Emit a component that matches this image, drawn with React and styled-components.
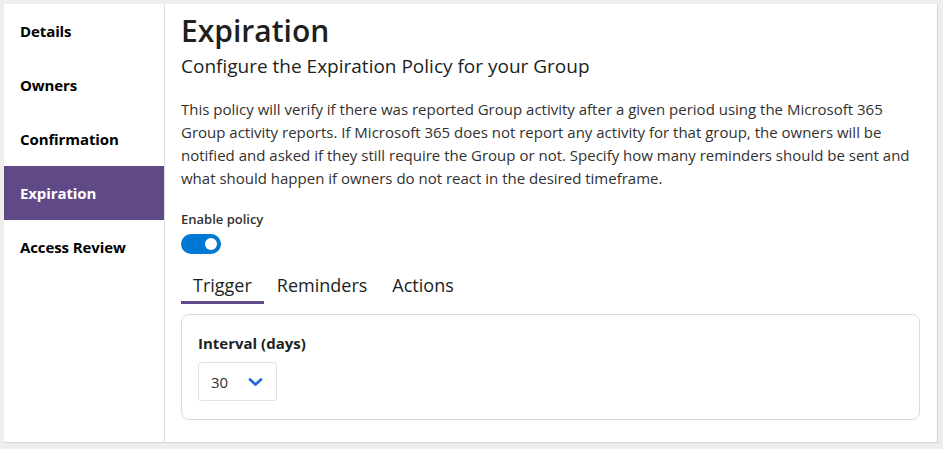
import React, { useState } from 'react'
import styled, { createGlobalStyle } from 'styled-components'

const GlobalStyle = createGlobalStyle`
  body {
    margin: 0;
    background: #efeeed;
    font-family: "Segoe UI", "Open Sans", sans-serif;
    color: #323130;
  }
`

const Shell = styled.div`
  display: flex;
  margin: 4px;
  width: 934px;
  height: 439px;
  box-sizing: border-box;
  border-right: 1px solid #d4d4d4;
  border-bottom: 1px solid #d4d4d4;
  background: #fff;
`

const Nav = styled.nav`
  display: flex;
  flex-direction: column;
  width: 160px;
  flex-shrink: 0;
  border-right: 1px solid #dcdcdc;
`

const NavItem = styled.div`
  display: flex;
  align-items: center;
  height: 54px;
  padding-left: 16px;
  font-size: 15px;
  font-weight: 700;
  letter-spacing: -0.1px;
  color: ${(props) => (props.active ? '#ffffff' : '#000000')};
  background: ${(props) => (props.active ? '#5f4986' : 'transparent')};
  cursor: pointer;
`

const Main = styled.main`
  flex: 1;
  padding: 9px 17px 0 16px;
  min-width: 0;
`

const Title = styled.h1`
  margin: 0;
  font-size: 30px;
  line-height: 36px;
  font-weight: 600;
  color: #201f1e;
`

const Subtitle = styled.h2`
  margin: 5px 0 0;
  font-size: 19px;
  line-height: 24px;
  font-weight: 400;
  color: #201f1e;
`

const Description = styled.p`
  margin: 20px 0 0;
  font-size: 15px;
  line-height: 23px;
`

const Label = styled.div`
  margin-top: 21px;
  font-size: 13px;
  line-height: 16px;
  font-weight: 600;
`

const Toggle = styled.button`
  display: flex;
  align-items: center;
  justify-content: ${(props) => (props.on ? 'flex-end' : 'flex-start')};
  margin-top: 7px;
  width: 40px;
  height: 20px;
  padding: 0 4px;
  border: none;
  border-radius: 10px;
  background: ${(props) => (props.on ? '#0078d4' : '#c8c6c4')};
  cursor: pointer;
`

const Knob = styled.span`
  width: 12px;
  height: 12px;
  border-radius: 50%;
  background: #fff;
`

const Tabs = styled.div`
  display: flex;
  margin-top: 14px;
`

const Tab = styled.div`
  height: 36px;
  box-sizing: border-box;
  padding: 0 12px;
  display: flex;
  align-items: center;
  font-size: 18px;
  color: #201f1e;
  border-bottom: 3px solid ${(props) => (props.active ? '#5f4986' : 'transparent')};
  cursor: pointer;

  & + & {
    padding-left: 13px;
  }
`

const Card = styled.section`
  margin-top: 10px;
  padding: 18px 16px 18px;
  border: 1px solid #dadada;
  border-radius: 8px;
`

const FieldLabel = styled.div`
  font-size: 15px;
  line-height: 21px;
  font-weight: 700;
  color: #201f1e;
`

const Select = styled.div`
  display: flex;
  align-items: center;
  justify-content: space-between;
  margin-top: 8px;
  width: 79px;
  height: 39px;
  box-sizing: border-box;
  padding: 0 13px 0 12px;
  border: 1px solid #e1e1e1;
  border-radius: 3px;
  font-size: 15px;
  color: #323130;
`

const Chevron = () => (
  <svg width="15" height="10" viewBox="0 0 15 10">
    <polyline points="2,2.5 7.5,7.5 13,2.5" fill="none" stroke="#2a6ad8" strokeWidth="2.8" strokeLinecap="round" strokeLinejoin="round" />
  </svg>
)

const navItems = ['Details', 'Owners', 'Confirmation', 'Expiration', 'Access Review']
const tabs = ['Trigger', 'Reminders', 'Actions']

export default function App() {
  const [active, setActive] = useState('Expiration')
  const [tab, setTab] = useState('Trigger')
  const [enabled, setEnabled] = useState(true)

  return (
    <>
      <GlobalStyle />
      <Shell>
        <Nav>
          {navItems.map((item) => (
            <NavItem key={item} active={item === active} onClick={() => setActive(item)}>
              {item}
            </NavItem>
          ))}
        </Nav>
        <Main>
          <Title>Expiration</Title>
          <Subtitle>Configure the Expiration Policy for your Group</Subtitle>
          <Description>
            This policy will verify if there was reported Group activity after a given period using the Microsoft 365
            Group activity reports. If Microsoft 365 does not report any activity for that group, the owners will be
            notified and asked if they still require the Group or not. Specify how many reminders should be sent and
            what should happen if owners do not react in the desired timeframe.
          </Description>
          <Label>Enable policy</Label>
          <Toggle on={enabled} onClick={() => setEnabled(!enabled)}>
            <Knob />
          </Toggle>
          <Tabs>
            {tabs.map((t) => (
              <Tab key={t} active={t === tab} onClick={() => setTab(t)}>
                {t}
              </Tab>
            ))}
          </Tabs>
          <Card>
            <FieldLabel>Interval (days)</FieldLabel>
            <Select>
              <span>30</span>
              <Chevron />
            </Select>
          </Card>
        </Main>
      </Shell>
    </>
  )
}
